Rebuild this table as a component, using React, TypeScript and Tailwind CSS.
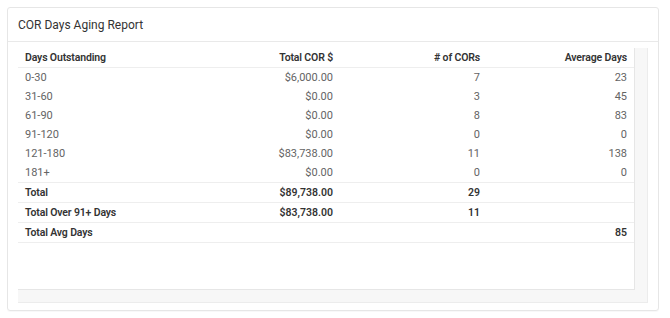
const rows = [
  { label: '0-30', total: '$6,000.00', count: '7', avg: '23' },
  { label: '31-60', total: '$0.00', count: '3', avg: '45' },
  { label: '61-90', total: '$0.00', count: '8', avg: '83' },
  { label: '91-120', total: '$0.00', count: '0', avg: '0' },
  { label: '121-180', total: '$83,738.00', count: '11', avg: '138' },
  { label: '181+', total: '$0.00', count: '0', avg: '0' },
]

const totals = [
  { label: 'Total', total: '$89,738.00', count: '29', avg: '' },
  { label: 'Total Over 91+ Days', total: '$83,738.00', count: '11', avg: '' },
  { label: 'Total Avg Days', total: '', count: '', avg: '85' },
]

const CELL = 'px-[7px] h-[19px] leading-[19px] whitespace-nowrap'
const BOLD = 'text-[10.5px] font-semibold text-[#333]'

export default function App() {
  return (
    <div className="w-[670px] h-[318px] bg-white pt-[7px] pl-[7px] font-['Roboto',sans-serif]">
      <div className="w-[652px] h-[304px] border border-[#e6e6e6] rounded-[3px] shadow-[0_1px_1px_rgba(0,0,0,0.03)] flex flex-col">
        <div className="h-[34px] border-b border-[#e9e9e9] px-[10px] flex items-center">
          <h2 className="text-[12px] text-[#333]">COR Days Aging Report</h2>
        </div>
        <div className="flex-1 px-[10px] pt-[6px] pb-[6px]">
          <div className="h-[255px] bg-[#f7f7f7] border-r border-b border-[#ececec] pr-[12px] pb-[12px]">
            <div className="h-full bg-white border-r border-b border-[#e6e6e6]">
              <table className="w-full table-fixed border-collapse text-[11px]">
                <colgroup>
                  <col />
                  <col className="w-[147px]" />
                  <col className="w-[147px]" />
                  <col className="w-[147px]" />
                </colgroup>
                <thead>
                  <tr className="border-b border-[#eeeeee]">
                    <th className={`${CELL} ${BOLD} text-left tracking-[-0.15px]`}>Days Outstanding</th>
                    <th className={`${CELL} ${BOLD} text-right tracking-[-0.15px]`}>Total COR $</th>
                    <th className={`${CELL} ${BOLD} text-right tracking-[-0.15px]`}>&#35; of CORs</th>
                    <th className={`${CELL} ${BOLD} text-right tracking-[-0.15px]`}>Average Days</th>
                  </tr>
                </thead>
                <tbody>
                  {rows.map((r) => (
                    <tr key={r.label} className="text-[#646464]">
                      <td className={`${CELL} text-left`}>{r.label}</td>
                      <td className={`${CELL} text-right`}>{r.total}</td>
                      <td className={`${CELL} text-right`}>{r.count}</td>
                      <td className={`${CELL} text-right`}>{r.avg}</td>
                    </tr>
                  ))}
                  {totals.map((r) => (
                    <tr key={r.label} className="border-t border-b border-[#eeeeee]">
                      <td className={`${CELL} ${BOLD} text-left tracking-[-0.15px]`}>{r.label}</td>
                      <td className={`${CELL} ${BOLD} text-right`}>{r.total}</td>
                      <td className={`${CELL} ${BOLD} text-right`}>{r.count}</td>
                      <td className={`${CELL} ${BOLD} text-right`}>{r.avg}</td>
                    </tr>
                  ))}
                </tbody>
              </table>
            </div>
          </div>
        </div>
      </div>
    </div>
  )
}
